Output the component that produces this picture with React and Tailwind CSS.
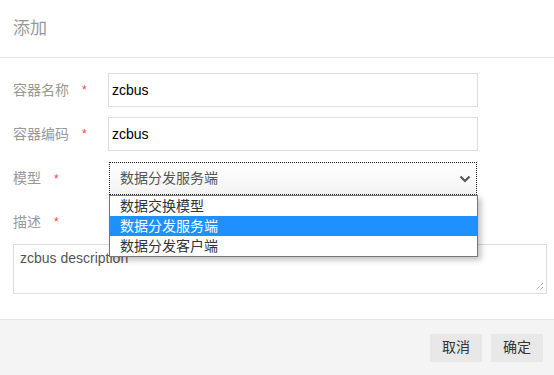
import React from "react";

const font = { fontFamily: '"Liberation Sans", Arial, "Noto Sans CJK SC", sans-serif' };

const options = ["数据交换模型", "数据分发服务端", "数据分发客户端"];

function Label({ children }) {
  return (
    <div className="w-[95px] shrink-0 flex items-center text-[14px] text-[#999]">
      <span>{children}</span>
      <span className="ml-[13px] text-[#f44] text-[12px]">*</span>
    </div>
  );
}

export default function App() {
  return (
    <div className="relative w-[554px] h-[375px] bg-white overflow-hidden flex flex-col" style={font}>
      {/* Header */}
      <div className="h-[58px] shrink-0 px-[13px] flex items-center border-b border-[#e5e5e5]">
        <span className="text-[17px] text-[#999]">添加</span>
      </div>

      {/* Body */}
      <div className="flex-1 px-[13px] pt-[15px]">
        <div className="flex items-center h-[34px] mb-[10px]">
          <Label>容器名称</Label>
          <div className="w-[370px] h-[34px] border border-[#ddd] flex items-center px-[3px] text-[14px] text-black">zcbus</div>
        </div>
        <div className="flex items-center h-[34px] mb-[11px]">
          <Label>容器编码</Label>
          <div className="w-[370px] h-[34px] border border-[#ddd] flex items-center px-[3px] text-[14px] text-black">zcbus</div>
        </div>
        <div className="flex items-center h-[33px] mb-[15px]">
          <Label>模型</Label>
          <div className="ml-[1px] w-[368px] h-[33px] border border-dotted border-[#222] bg-gradient-to-b from-white to-[#f3f3f3] flex items-center justify-between pl-[10px] pr-[5px] text-[14px] text-[#555]">
            <span>数据分发服务端</span>
            <svg width="12" height="8" viewBox="0 0 12 8">
              <path d="M1.5 1.5 L6 6 L10.5 1.5" fill="none" stroke="#555" strokeWidth="2.2" />
            </svg>
          </div>
        </div>
        <div className="flex items-center h-[24px] mb-[10px]">
          <Label>描述</Label>
        </div>
        <div className="w-[534px] h-[50px] border border-[#ddd] relative px-[6px] pt-[3px] text-[14px] text-[#555]">
          zcbus description
          <svg className="absolute right-[2px] bottom-[2px]" width="9" height="9" viewBox="0 0 9 9">
            <path d="M8 1 L1 8 M8 5 L5 8" stroke="#777" strokeWidth="1" strokeDasharray="1 1" />
          </svg>
        </div>
      </div>

      {/* Footer */}
      <div className="h-[56px] shrink-0 bg-[#f4f4f4] border-t border-[#e5e5e5] flex items-center justify-end gap-[9px] pr-[11px]">
        <button className="w-[52px] h-[28px] bg-[#e8e8e8] text-[14px] text-[#333]">取消</button>
        <button className="w-[52px] h-[28px] bg-[#e8e8e8] text-[14px] text-[#333]">确定</button>
      </div>

      {/* Open select list */}
      <div className="absolute left-[109px] top-[195px] w-[369px] border border-[#767676] bg-white shadow-[3px_3px_6px_rgba(0,0,0,0.25)] text-[14px] text-[#333]">
        {options.map((o, i) => (
          <div
            key={o}
            className={`h-[20px] flex items-center pl-[10px] ${i === 1 ? "bg-[#1e90ff] text-white" : ""}`}
          >
            {o}
          </div>
        ))}
      </div>
    </div>
  );
}
